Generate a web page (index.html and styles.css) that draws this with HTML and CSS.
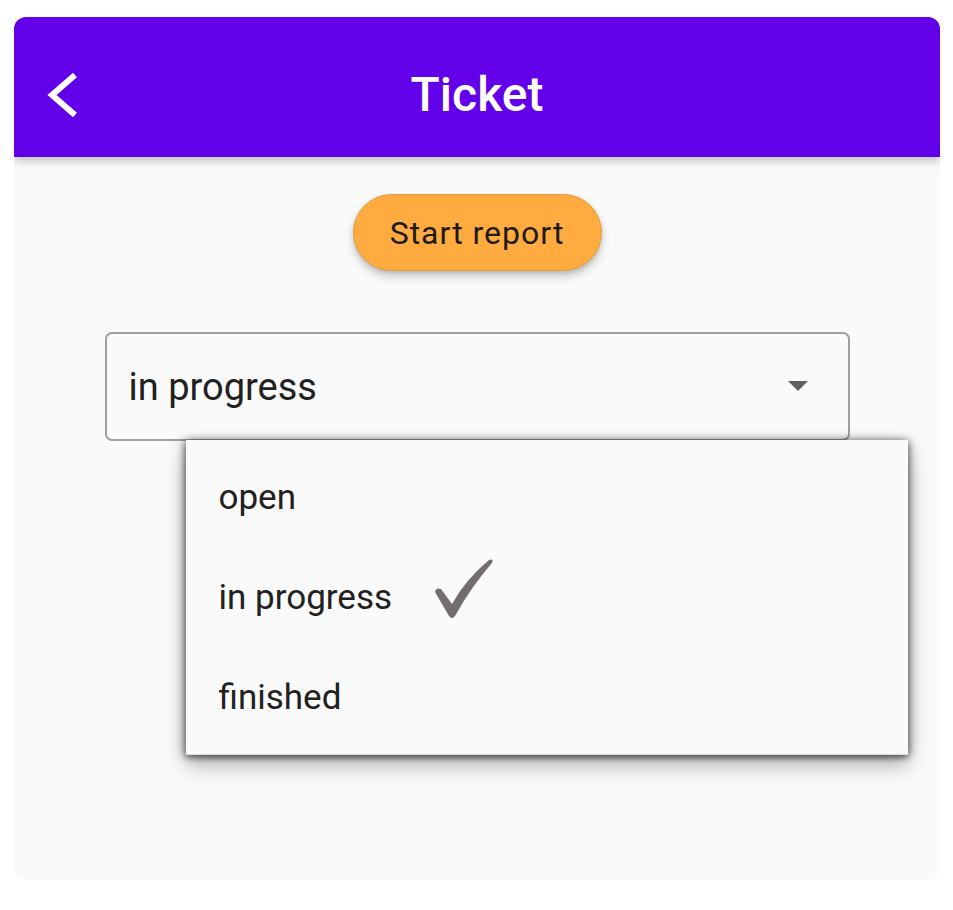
FILE: index.html
```html
<!DOCTYPE html>
<html lang="en">

<head>
    <meta charset="UTF-8">
    <meta name="viewport" content="width=device-width, initial-scale=1.0">
    <title>Ticket</title>
    <link rel="stylesheet" href="styles.css">
</head>

<body>

    <div class="phone">
        <header class="appbar">
            <button class="back" type="button" aria-label="Back">
                <svg width="40" height="48" viewBox="0 0 40 48">
                    <path d="M31 4 L8 24 L31 44" fill="none" stroke="#fff" stroke-width="6" />
                </svg>
            </button>
            <h1>Ticket</h1>
            <span></span>
        </header>

        <main class="content">
            <button class="report" type="button">Start report</button>

            <div class="select">
                <span class="value">in progress</span>
                <span class="caret"></span>

                <ul class="menu">
                    <li>open</li>
                    <li class="selected">in progress
                        <svg class="check" width="60" height="60" viewBox="0 0 60 60">
                            <path d="M1 33 Q2 28 7 30 L18 45 Q32 20 55 1 Q60 -1 58 4 Q37 28 21 57 Q18 61 15 57 Z" fill="#736d6e" />
                        </svg>
                    </li>
                    <li>finished</li>
                </ul>
            </div>
        </main>
    </div>

</body>

</html>
```

FILE: styles.css
```css
body {
    font-family: Roboto, "Noto Sans", sans-serif;
    background-color: #ffffff;
    margin: 0;
    padding: 17px 13px 0 14px;
}

.phone {
    width: 926px;
    height: 863px;
    background: #fafafa;
    border-radius: 12px;
    overflow: hidden;
}

.appbar {
    display: grid;
    grid-template-columns: 1fr auto 1fr;
    align-items: center;
    height: 140px;
    box-sizing: border-box;
    padding-top: 16px;
    background-color: #6200ea;
    box-shadow: 0 4px 8px rgba(0, 0, 0, 0.22);
    position: relative;
    z-index: 1;
}

.back {
    justify-self: start;
    margin-left: 30px;
    padding: 0;
    border: none;
    background: none;
    display: flex;
}

.appbar h1 {
    margin: 0;
    color: #ffffff;
    font-size: 48px;
    font-weight: 500;
    line-height: 1;
}

.content {
    display: flex;
    flex-direction: column;
    align-items: center;
    padding-top: 37px;
}

.report {
    width: 249px;
    height: 77px;
    border: 1.5px solid #e39a3a;
    border-radius: 39px;
    background-color: #ffab40;
    color: #1d1a16;
    font-family: Roboto, sans-serif;
    font-size: 32px;
    font-weight: 400;
    letter-spacing: 1px;
    box-shadow: 0 6px 10px rgba(0, 0, 0, 0.18), 0 2px 4px rgba(0, 0, 0, 0.12);
}

.select {
    position: relative;
    margin-top: 61px;
    width: 745px;
    height: 109px;
    box-sizing: border-box;
    border: 2px solid #9e9e9e;
    border-radius: 7px;
    display: flex;
    align-items: center;
    justify-content: space-between;
    padding: 0 40px 0 22px;
}

.value {
    font-size: 38px;
    color: #212121;
}

.caret {
    width: 0;
    height: 0;
    border-left: 10px solid transparent;
    border-right: 10px solid transparent;
    border-top: 10px solid #5f5f5f;
    margin-bottom: 2px;
}

.menu {
    position: absolute;
    left: 79px;
    top: 106px;
    width: 722px;
    margin: 0;
    padding: 7px 0;
    list-style: none;
    background: #fafafa;
    border-bottom: 1px solid #dcdcdc;
    box-shadow: 0 10px 20px rgba(0, 0, 0, 0.3), 0 3px 6px rgba(0, 0, 0, 0.35), -3px 0 8px rgba(0, 0, 0, 0.3), 3px 0 8px rgba(0, 0, 0, 0.25);
}

.menu li {
    height: 100px;
    display: flex;
    align-items: center;
    padding-left: 33px;
    font-size: 35px;
    color: #212121;
}

.check {
    margin-left: 42px;
    margin-bottom: 16px;
}
```
